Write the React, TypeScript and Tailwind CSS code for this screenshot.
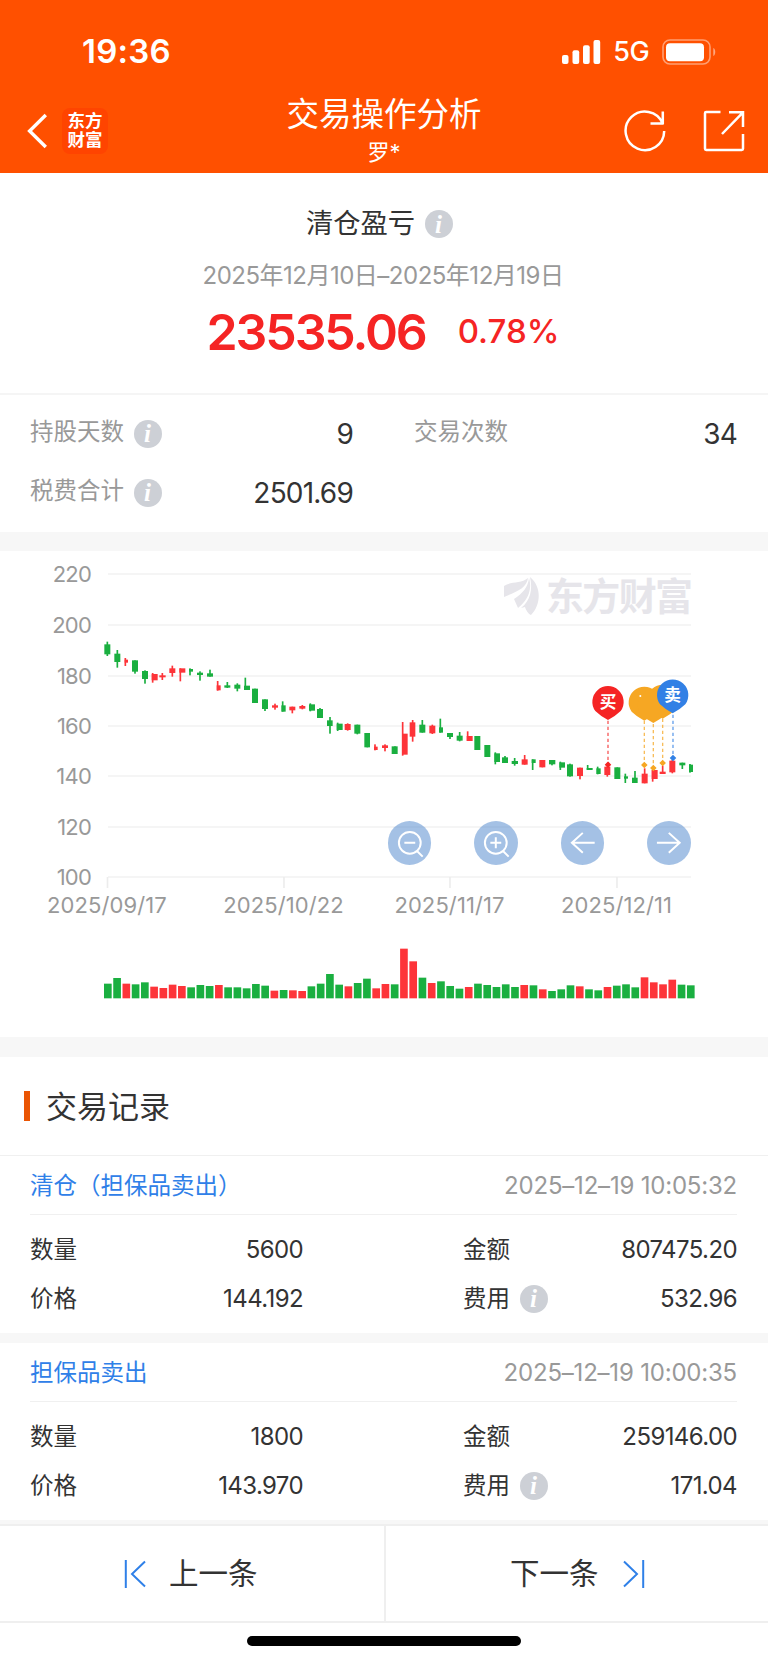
import clsx from "clsx";

type Candle = [up: 0 | 1, x: number, w: number, top: number, bottom: number, wick: number, high: number, low: number];

// Chart space is three units per pixel
const candles: Candle[] = [
  [0, 43, 18, 253, 283, 52, 245, 288],
  [0, 73, 18, 281, 306, 82, 270, 323],
  [1, 104, 10, 299, 308, 106, 294, 318],
  [0, 126, 18, 301, 335, 135, 301, 341],
  [0, 156, 18, 333, 357, 165, 331, 371],
  [1, 185, 18, 342, 361, 188, 339, 368],
  [1, 208, 19, 346, 352, 217, 339, 360],
  [1, 238, 18, 325, 339, 247, 317, 350],
  [1, 268, 18, 325, 338, 271, 325, 364],
  [0, 297, 12, 327, 335, 300, 325, 346],
  [0, 321, 18, 338, 345, 330, 334, 362],
  [0, 351, 18, 340, 350, 360, 329, 350],
  [1, 380, 12, 376, 391, 383, 363, 392],
  [0, 403, 18, 376, 383, 412, 366, 384],
  [0, 433, 18, 374, 386, 442, 370, 394],
  [0, 462, 18, 377, 390, 466, 353, 390],
  [0, 486, 18, 386, 429, 495, 386, 429],
  [0, 516, 18, 418, 447, 525, 418, 453],
  [1, 546, 18, 436, 443, 555, 431, 449],
  [0, 574, 13, 436, 455, 578, 424, 455],
  [1, 598, 18, 440, 451, 607, 440, 460],
  [1, 628, 18, 438, 446, 637, 435, 448],
  [0, 657, 18, 433, 452, 661, 430, 454],
  [0, 681, 18, 447, 474, 690, 444, 474],
  [0, 711, 17, 481, 498, 720, 471, 521],
  [0, 740, 18, 491, 510, 743, 488, 513],
  [1, 764, 18, 492, 510, 773, 490, 512],
  [0, 793, 18, 494, 521, 802, 494, 523],
  [0, 823, 17, 519, 562, 832, 519, 562],
  [1, 852, 11, 560, 570, 855, 553, 571],
  [1, 876, 18, 556, 564, 885, 553, 574],
  [0, 905, 18, 559, 582, 915, 559, 582],
  [1, 936, 17, 521, 584, 938, 486, 587],
  [1, 959, 17, 487, 530, 968, 480, 545],
  [0, 988, 18, 494, 518, 997, 480, 518],
  [1, 1018, 18, 497, 520, 1027, 494, 522],
  [0, 1047, 12, 502, 518, 1051, 476, 518],
  [0, 1071, 18, 519, 531, 1080, 519, 537],
  [0, 1100, 18, 527, 542, 1109, 516, 544],
  [1, 1130, 18, 528, 543, 1133, 514, 543],
  [0, 1153, 18, 528, 570, 1162, 528, 570],
  [0, 1183, 18, 555, 591, 1192, 555, 591],
  [0, 1213, 17, 580, 606, 1216, 577, 613],
  [0, 1236, 18, 592, 609, 1245, 588, 609],
  [0, 1265, 19, 603, 612, 1274, 594, 617],
  [1, 1295, 18, 598, 614, 1304, 585, 614],
  [0, 1325, 12, 598, 609, 1328, 598, 630],
  [1, 1348, 18, 600, 622, 1357, 600, 622],
  [0, 1377, 19, 600, 613, 1386, 600, 616],
  [0, 1408, 17, 607, 623, 1411, 605, 630],
  [0, 1431, 18, 613, 649, 1440, 611, 650],
  [1, 1461, 18, 623, 648, 1470, 623, 658],
  [0, 1490, 18, 624, 630, 1493, 615, 630],
  [0, 1519, 13, 625, 642, 1523, 620, 643],
  [1, 1543, 18, 620, 645, 1552, 620, 650],
  [0, 1573, 18, 622, 657, 1582, 622, 657],
  [0, 1602, 12, 649, 656, 1606, 641, 669],
  [0, 1626, 17, 653, 669, 1635, 633, 669],
  [1, 1655, 18, 641, 670, 1664, 625, 670],
  [1, 1685, 18, 630, 657, 1688, 630, 665],
  [1, 1709, 18, 635, 642, 1718, 617, 642],
  [1, 1738, 18, 602, 637, 1747, 600, 640],
  [0, 1768, 18, 608, 616, 1777, 608, 627],
  [0, 1797, 12, 614, 636, 1800, 612, 638],
];

const volumes = [
  44, 61, 44, 42, 48, 35, 31, 41, 37, 33, 40, 37, 40, 33, 33, 30, 43, 38, 23, 25, 24, 22, 36, 44, 73, 41, 36, 46, 59,
  30, 43, 42, 149, 111, 62, 46, 51, 37, 29, 34, 44, 40, 34, 42, 34, 40, 39, 27, 22, 27, 39, 36, 27, 24, 34, 38, 42, 33,
  63, 48, 42, 56, 41, 39,
];
const redVolumes = [2, 5, 6, 7, 8, 12, 18, 20, 21, 26, 29, 30, 32, 33, 35, 39, 45, 47, 51, 54, 58, 59, 60, 61];

const grid = [
  { label: "220", y: 23 },
  { label: "200", y: 74 },
  { label: "180", y: 125 },
  { label: "160", y: 175 },
  { label: "140", y: 225 },
  { label: "120", y: 276 },
  { label: "100", y: 326 },
];

const dates = [
  { label: "2025/09/17", x: 107.5 },
  { label: "2025/10/22", x: 284 },
  { label: "2025/11/17", x: 450 },
  { label: "2025/12/11", x: 617 },
];

const records = [
  { type: "清仓（担保品卖出）", time: "2025–12–19 10:05:32", count: "5600", amount: "807475.20", price: "144.192", fee: "532.96" },
  { type: "担保品卖出", time: "2025–12–19 10:00:35", count: "1800", amount: "259146.00", price: "143.970", fee: "171.04" },
];

const RED = "#fd3439";
const GREEN = "#1aaf40";

function Info({ className }: { className?: string }) {
  return (
    <span
      className={clsx(
        "flex size-7 shrink-0 items-center justify-center rounded-full bg-[#cdd0d6] pr-px font-['Liberation_Serif',serif] text-[25px] leading-none font-bold tracking-normal text-white italic",
        className,
      )}
    >
      i
    </span>
  );
}

function StatusBar() {
  return (
    <div className="flex h-[102px] items-center justify-between pt-0.5 pr-[51px] pl-[82px]">
      <span className="text-[33px] font-semibold tracking-[0.2px]">19:36</span>
      <div className="flex items-center">
        <svg className="h-6 w-[39px]" viewBox="0 0 39 24" fill="white">
          <rect x="0" y="15" width="6.5" height="9" rx="2" />
          <rect x="10.5" y="10.3" width="6.7" height="13.7" rx="2" />
          <rect x="21" y="5.3" width="6.7" height="18.7" rx="2" />
          <rect x="31.5" y="0" width="6.7" height="24" rx="2" />
        </svg>
        <span className="ml-[12px] text-[27px] font-medium tracking-[-0.6px]">5G</span>
        <svg className="ml-[13px] h-[26px] w-[55px]" viewBox="0 0 55 26">
          <rect x="1" y="1" width="47" height="24" rx="7" fill="none" stroke="white" strokeOpacity=".45" strokeWidth="1.6" />
          <rect x="4" y="4.2" width="38" height="18" rx="4" fill="white" />
          <path d="M51.3 9v8c2.6-1 2.6-7 0-8z" fill="white" fillOpacity=".5" />
        </svg>
      </div>
    </div>
  );
}

function Header() {
  return (
    <header className="h-[173px] bg-[#ff5000] text-white">
      <StatusBar />
      <div className="flex h-[57px] items-center">
        <div className="flex w-60 items-center pl-[27px]">
          <svg className="h-9 w-5" viewBox="0 0 20 36" fill="none" stroke="white" strokeWidth="3.4">
            <path d="M18.8 2 2.6 18l16.2 16" />
          </svg>
          <div className="ml-[15px] flex size-[46px] flex-col items-center justify-center rounded-lg bg-[#ff4400] pb-0.5 text-[17.5px] leading-[19px] font-bold">
            <span>东方</span>
            <span>财富</span>
          </div>
        </div>
        <div className="flex flex-1 flex-col items-center pt-1">
          <h1 className="text-[32.5px] leading-10">交易操作分析</h1>
          <p className="text-[22px] leading-[35px]">罗*</p>
        </div>
        <div className="flex w-60 justify-end gap-[37px] pr-[23px]">
          <svg className="size-[42px]" viewBox="0 0 42 42" fill="none" stroke="white" strokeWidth="2.5">
            <path d="M40.2 21A19.3 19.3 0 1 1 38.7 13.4M38.8 1.5v12.9M26.5 13.4h12.5" />
          </svg>
          <svg className="size-[42px]" viewBox="0 0 42 42" fill="none" stroke="white" strokeWidth="2.5">
            <path d="M17.5 2H3.2Q2 2 2 3.2v35.6Q2 40 3.2 40h35.6q1.2 0 1.2-1.2V24M19 24 39.5 2.8M26 2.3h14V17" />
          </svg>
        </div>
      </div>
    </header>
  );
}

function Summary() {
  return (
    <section>
      <div className="flex h-[222px] flex-col items-center border-b-2 border-[#f5f5f5]">
        <div className="mt-[31px] flex h-10 items-center pr-[9px]">
          <h2 className="text-[27.3px]">清仓盈亏</h2>
          <Info className="ml-[10px]" />
        </div>
        <p className="mt-[14px] flex h-9 items-center pr-[2px] text-[24px] tracking-[-0.5px] text-[#999]">
          2025年12月10日–2025年12月19日
        </p>
        <div className="mt-[8px] flex h-[60px] items-center pr-[2px] text-[#f52424]">
          <span className="text-[50px] font-semibold tracking-[-2.1px]">23535.06</span>
          <span className="ml-[32px] text-[33px] font-medium">0.78%</span>
        </div>
      </div>
      <div className="grid h-[137px] grid-cols-2 content-start gap-x-[61px] pt-[9px] pr-[31px] pl-[30px] text-[28px] tracking-[-0.8px]">
        <div className="flex h-[59px] items-center">
          <span className="pb-1 text-[23.5px] tracking-normal text-[#999]">持股天数</span>
          <Info className="ml-[10px]" />
          <span className="ml-auto">9</span>
        </div>
        <div className="flex h-[59px] items-center justify-between">
          <span className="pb-1 text-[23.5px] tracking-normal text-[#999]">交易次数</span>
          <span>34</span>
        </div>
        <div className="flex h-[59px] items-center">
          <span className="pb-1 text-[23.5px] tracking-normal text-[#999]">税费合计</span>
          <Info className="ml-[10px]" />
          <span className="ml-auto">2501.69</span>
        </div>
      </div>
    </section>
  );
}

function Pin({ x, y, color, label }: { x: number; y: number; color: string; label?: string }) {
  return (
    <g transform={`translate(${x} ${y})`}>
      <path d="M-38 28A47 47 0 1 1 38 28Q24 42 0 55Q-24 42-38 28z" fill={color} />
      {label && (
        <text y="18" textAnchor="middle" fill="white" fontSize="50" fontWeight="700">
          {label}
        </text>
      )}
    </g>
  );
}

function Target({ x, from, y, color }: { x: number; from: number; y: number; color: string }) {
  return (
    <g stroke={color} strokeWidth="4" fill={color}>
      <path d={`M${x} ${from}V${y}`} strokeDasharray="10 8" opacity=".75" />
      <path d={`M${x} ${y - 7}l7 7-7 7-7-7z`} />
    </g>
  );
}

function Chart() {
  return (
    <section className="relative h-[486px]">
      <svg className="block h-full w-full" viewBox="0 0 768 486">
        {grid.map((line) => (
          <g key={line.label}>
            <path d={`M108 ${line.y}H691`} stroke="#f5f5f5" strokeWidth="2" />
            <text x="91" y={line.y + 8} textAnchor="end" fill="#999" fontSize="22" letterSpacing="-0.8">
              {line.label}
            </text>
          </g>
        ))}
        {dates.map((date) => (
          <g key={date.label}>
            <path d={`M${date.x} 326v11`} stroke="#ececec" strokeWidth="1.6" />
            <text x={date.x - 0.5} y="362" textAnchor="middle" fill="#999" fontSize="22" letterSpacing="0.1">
              {date.label}
            </text>
          </g>
        ))}
        <g transform="translate(504 26)" fill="#e6e5ea">
          <path d="M0 9C7 4 17 7 24 1 23 11 12 15 0 20z" />
          <path d="M10 22C19 16 24 10 25 1 29 14 22 25 14 31z" />
          <path d="M17 31C26 24 29 13 26 0c12 10 11 28 1 38-3-1-5-5-6-8z" />
        </g>
        <text x="546" y="59" fill="#e6e5ea" fontSize="38" fontWeight="700" textLength="147">
          东方财富
        </text>
        <g transform="translate(90 9) scale(.33333)">
          {candles.map(([up, x, w, top, bottom, wick, high, low]) => (
            <g key={x} fill={up ? RED : GREEN}>
              <rect x={x} y={top} width={w} height={bottom - top} />
              <rect x={wick - 2.5} y={high} width="5" height={low - high} />
            </g>
          ))}
          {volumes.map((height, i) => (
            <rect
              key={i}
              x={42 + i * 27.76}
              y={1315 - height}
              width="23"
              height={height}
              fill={redVolumes.includes(i) ? RED : GREEN}
            />
          ))}
          <Target x={1554} from={482} y={614} color="#f52424" />
          <Target x={1663} from={482} y={615} color="#f6a723" />
          <Target x={1690} from={492} y={624} color="#f6a723" />
          <Target x={1718} from={476} y={609} color="#f6a723" />
          <Target x={1749} from={464} y={594} color="#3280e5" />
          <Pin x={1554} y={425} color="#f52424" label="买" />
          <Pin x={1663} y={427} color="#f6a723" />
          <Pin x={1718} y={421} color="#f6a723" />
          <Pin x={1690} y={434} color="#f6a723" />
          <circle cx="1651" cy="408" r="3" fill="white" />
          <Pin x={1748} y={405} color="#3280e5" label="卖" />
        </g>
      </svg>
      <div className="absolute top-[270px] right-[77px] flex gap-[43px]">
        {[
          "M11 11m-11 0a11 11 0 1 0 22 0a11 11 0 1 0-22 0M5.5 11h11M18 19l6 6",
          "M11 11m-11 0a11 11 0 1 0 22 0a11 11 0 1 0-22 0M5.5 11h11M11 5.5v11M18 19l6 6",
          "M23 11H0M11 1 0 11l11 10",
          "M-1 11h22M11 1l11 10-11 10",
        ].map((d) => (
          <button key={d} className="size-[43.6px] rounded-full bg-[#4a84cc]/50">
            <svg className="size-full" viewBox="-11 -11 44 44" fill="none" stroke="white" strokeWidth="2">
              <path d={d} />
            </svg>
          </button>
        ))}
      </div>
    </section>
  );
}

function Record({ record }: { record: (typeof records)[number] }) {
  return (
    <article className="h-[177px] pr-[31px] pl-[30px] text-[24px] tracking-[-0.6px]">
      <div className="flex h-[59px] items-center justify-between border-b border-[#f0f0f0] pt-[2px]">
        <h3 className="text-[23.5px] tracking-normal text-[#2f80e8]">{record.type}</h3>
        <time className="tracking-[-0.2px] text-[#999]">{record.time}</time>
      </div>
      <div className="grid grid-cols-[273px_274px] justify-between pt-[10px]">
        <div className="flex h-[49px] items-center justify-between">
          <span className="text-[23.5px] tracking-normal">数量</span>
          <span>{record.count}</span>
        </div>
        <div className="flex h-[49px] items-center justify-between">
          <span className="text-[23.5px] tracking-normal">金额</span>
          <span>{record.amount}</span>
        </div>
        <div className="flex h-[49px] items-center justify-between">
          <span className="text-[23.5px] tracking-normal">价格</span>
          <span>{record.price}</span>
        </div>
        <div className="flex h-[49px] items-center">
          <span className="text-[23.5px] tracking-normal">费用</span>
          <Info className="ml-[10px]" />
          <span className="ml-auto">{record.fee}</span>
        </div>
      </div>
    </article>
  );
}

function Footer() {
  return (
    <footer>
      <nav className="grid h-[99px] grid-cols-2 border-y-2 border-[#efefef] text-[29.5px]">
        <button className="flex items-center pl-[124px]">
          <svg className="h-7 w-[22px]" viewBox="0 0 22 28" fill="none" stroke="#2f80e8" strokeWidth="2">
            <path d="M1.8 0v28M21 1.5 8 14l13 12.5" />
          </svg>
          <span className="ml-[23px]">上一条</span>
        </button>
        <button className="flex items-center border-l-2 border-[#efefef] pl-[124px]">
          <span>下一条</span>
          <svg className="ml-[24px] h-7 w-[22px]" viewBox="0 0 22 28" fill="none" stroke="#2f80e8" strokeWidth="2">
            <path d="M20.2 0v28M1 1.5 14 14 1 26.5" />
          </svg>
        </button>
      </nav>
      <div className="mx-auto mt-[13px] h-[10px] w-[274px] rounded-full bg-black" />
    </footer>
  );
}

export default function App() {
  return (
    <main className="h-[1663px] w-[768px] overflow-hidden bg-white font-['Inter','Noto_Sans_CJK_SC',sans-serif] text-[#333]">
      <Header />
      <Summary />
      <div className="h-[19px] bg-[#f7f7f7]" />
      <Chart />
      <div className="h-5 bg-[#f7f7f7]" />
      <section>
        <div className="flex h-[99px] items-center border-b border-[#f0f0f0] pl-6">
          <span className="h-[30px] w-[6px] bg-[#ea5504]" />
          <h2 className="ml-4 pt-[2px] text-[31px]">交易记录</h2>
        </div>
        {records.map((record, i) => (
          <div key={record.time}>
            <Record record={record} />
            <div className={clsx("bg-[#f7f7f7]", i === 0 ? "h-[10px]" : "h-1")} />
          </div>
        ))}
      </section>
      <Footer />
    </main>
  );
}
